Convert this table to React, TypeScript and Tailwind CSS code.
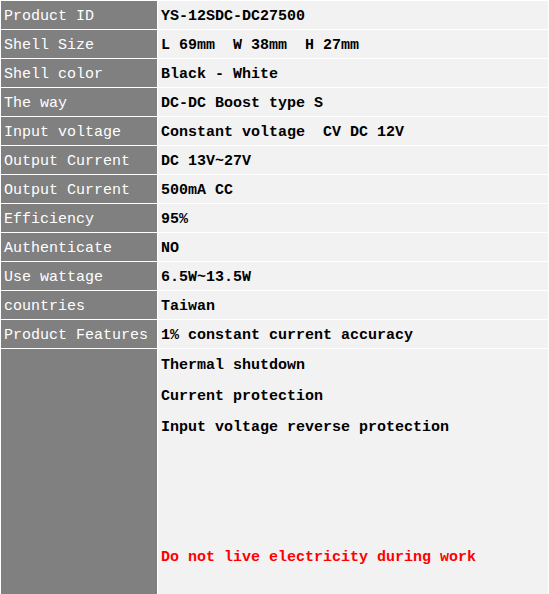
const rows: [string, string][] = [
  ["Product ID", "YS-12SDC-DC27500"],
  ["Shell Size", "L 69mm  W 38mm  H 27mm"],
  ["Shell color", "Black - White"],
  ["The way", "DC-DC Boost type S"],
  ["Input voltage", "Constant voltage  CV DC 12V"],
  ["Output Current", "DC 13V~27V"],
  ["Output Current", "500mA CC"],
  ["Efficiency", "95%"],
  ["Authenticate", "NO"],
  ["Use wattage", "6.5W~13.5W"],
  ["countries", "Taiwan"],
  ["Product Features", "1% constant current accuracy"],
];

const features = ["Thermal shutdown", "Current protection", "Input voltage reverse protection"];

export default function App() {
  return (
    <div
      className="w-[549px] h-[594px] overflow-hidden bg-white p-px pb-0 text-[15px] leading-none whitespace-pre"
      style={{ fontFamily: '"Liberation Mono", monospace' }}
    >
      <div className="flex flex-col gap-px h-full">
        {rows.map(([label, value], i) => (
          <div key={i} className="flex gap-px h-[28px] shrink-0">
            <div className="w-[156px] bg-[#808080] text-white flex items-center px-[3px] pt-[3px]">{label}</div>
            <div className="flex-1 bg-[#f2f2f2] text-black font-bold flex items-center px-[3px] pt-[3px]">{value}</div>
          </div>
        ))}
        <div className="flex gap-px flex-1">
          <div className="w-[156px] bg-[#808080]"></div>
          <div className="flex-1 bg-[#f2f2f2] font-bold px-[3px] pt-[9px]">
            <div className="flex flex-col gap-[16px]">
              {features.map((f) => (
                <div key={f} className="h-[15px] flex items-center">{f}</div>
              ))}
            </div>
            <div className="mt-[115px] text-[#ff0000]">Do not live electricity during work</div>
          </div>
        </div>
      </div>
    </div>
  );
}
